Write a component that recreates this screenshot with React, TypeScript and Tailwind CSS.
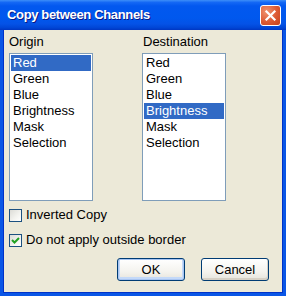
const channels = ['Red', 'Green', 'Blue', 'Brightness', 'Mask', 'Selection'];

function ChannelList({ label, selected, first }: { label: string; selected: string; first?: boolean }) {
  return (
    <div className={`flex w-[84px] flex-col ${first ? '' : 'ml-[49px]'}`}>
      <div className={`h-[16px] leading-[16px] ${first ? '' : 'pl-[1px]'}`}>{label}</div>
      <div className="mt-[3px] h-[148px] border border-[#7f9db9] bg-white p-[1px]">
        {channels.map((c) => (
          <div
            key={c}
            className={`h-[16px] pl-[2px] leading-[16px] ${
              c === selected ? 'bg-[#316ac5] text-white' : 'text-black'
            }`}
          >
            {c}
          </div>
        ))}
      </div>
    </div>
  );
}

function Checkbox({ label, checked }: { label: string; checked?: boolean }) {
  return (
    <div className="flex h-[16px] items-center gap-[4px]">
      <div className="flex h-[13px] w-[13px] items-center justify-center border border-[#1c5180] bg-[linear-gradient(135deg,#dcdcd7_0%,#f4f4f0_60%,#ffffff_100%)]">
        {checked && (
          <svg width="11" height="11" viewBox="0 0 11 11">
            <polyline points="2,5 4.5,7.5 9,3" fill="none" stroke="#21a121" strokeWidth="2" />
          </svg>
        )}
      </div>
      <span className="leading-[16px]">{label}</span>
    </div>
  );
}

export default function App() {
  return (
    <div
      className="flex h-[296px] w-[286px] flex-col bg-[#0a56e6] text-[13px] text-black"
      style={{ fontFamily: '"Liberation Sans", Arial, sans-serif' }}
    >
      {/* Title bar */}
      <div className="flex h-[30px] items-center justify-between bg-[linear-gradient(to_bottom,#3d8ff8_0%,#1468f5_8%,#0258ef_20%,#0058ee_60%,#0452e6_80%,#0046d6_92%,#0036c2_100%)] pl-[7px] pr-[5px]">
        <span className="text-[13px] font-bold tracking-[-0.35px] text-white [text-shadow:1px_1px_0_#0a1883]">
          Copy between Channels
        </span>
        <div className="flex h-[21px] w-[21px] items-center justify-center rounded-[3px] border border-white bg-[radial-gradient(circle_at_30%_30%,#f0936f_0%,#dc5a33_55%,#c6411a_100%)]">
          <svg width="13" height="13" viewBox="0 0 13 13">
            <path d="M2.5 2.5 L10.5 10.5 M10.5 2.5 L2.5 10.5" stroke="white" strokeWidth="2.2" strokeLinecap="square" />
          </svg>
        </div>
      </div>

      {/* Body */}
      <div className="mx-[3px] mb-[3px] flex flex-1 flex-col border border-t-0 border-[#0032c8] bg-[#ece9d8] pt-[4px] pl-[5px]">
        <div className="flex">
          <ChannelList label="Origin" selected="Red" first />
          <ChannelList label="Destination" selected="Brightness" />
        </div>

        <div className="mt-[6px]">
          <Checkbox label="Inverted Copy" />
        </div>
        <div className="mt-[9px]">
          <Checkbox label="Do not apply outside border" checked />
        </div>

        <div className="mt-[10px] flex justify-end gap-[16px] pr-[13px]">
          <button className="h-[23px] w-[68px] rounded-[3px] border border-[#003c74] bg-[linear-gradient(to_bottom,#ffffff_0%,#f4f3ee_60%,#e6e4dc_100%)] leading-[20px] shadow-[inset_0_0_0_1px_#a8c5f2,inset_0_-1px_0_2px_#c4d9f8]">
            OK
          </button>
          <button className="h-[23px] w-[68px] rounded-[3px] border border-[#003c74] bg-[linear-gradient(to_bottom,#ffffff_0%,#f4f3ee_60%,#e6e4dc_100%)] leading-[20px] shadow-[inset_-1px_-2px_0_#d6d0c5]">
            Cancel
          </button>
        </div>
      </div>
    </div>
  );
}
